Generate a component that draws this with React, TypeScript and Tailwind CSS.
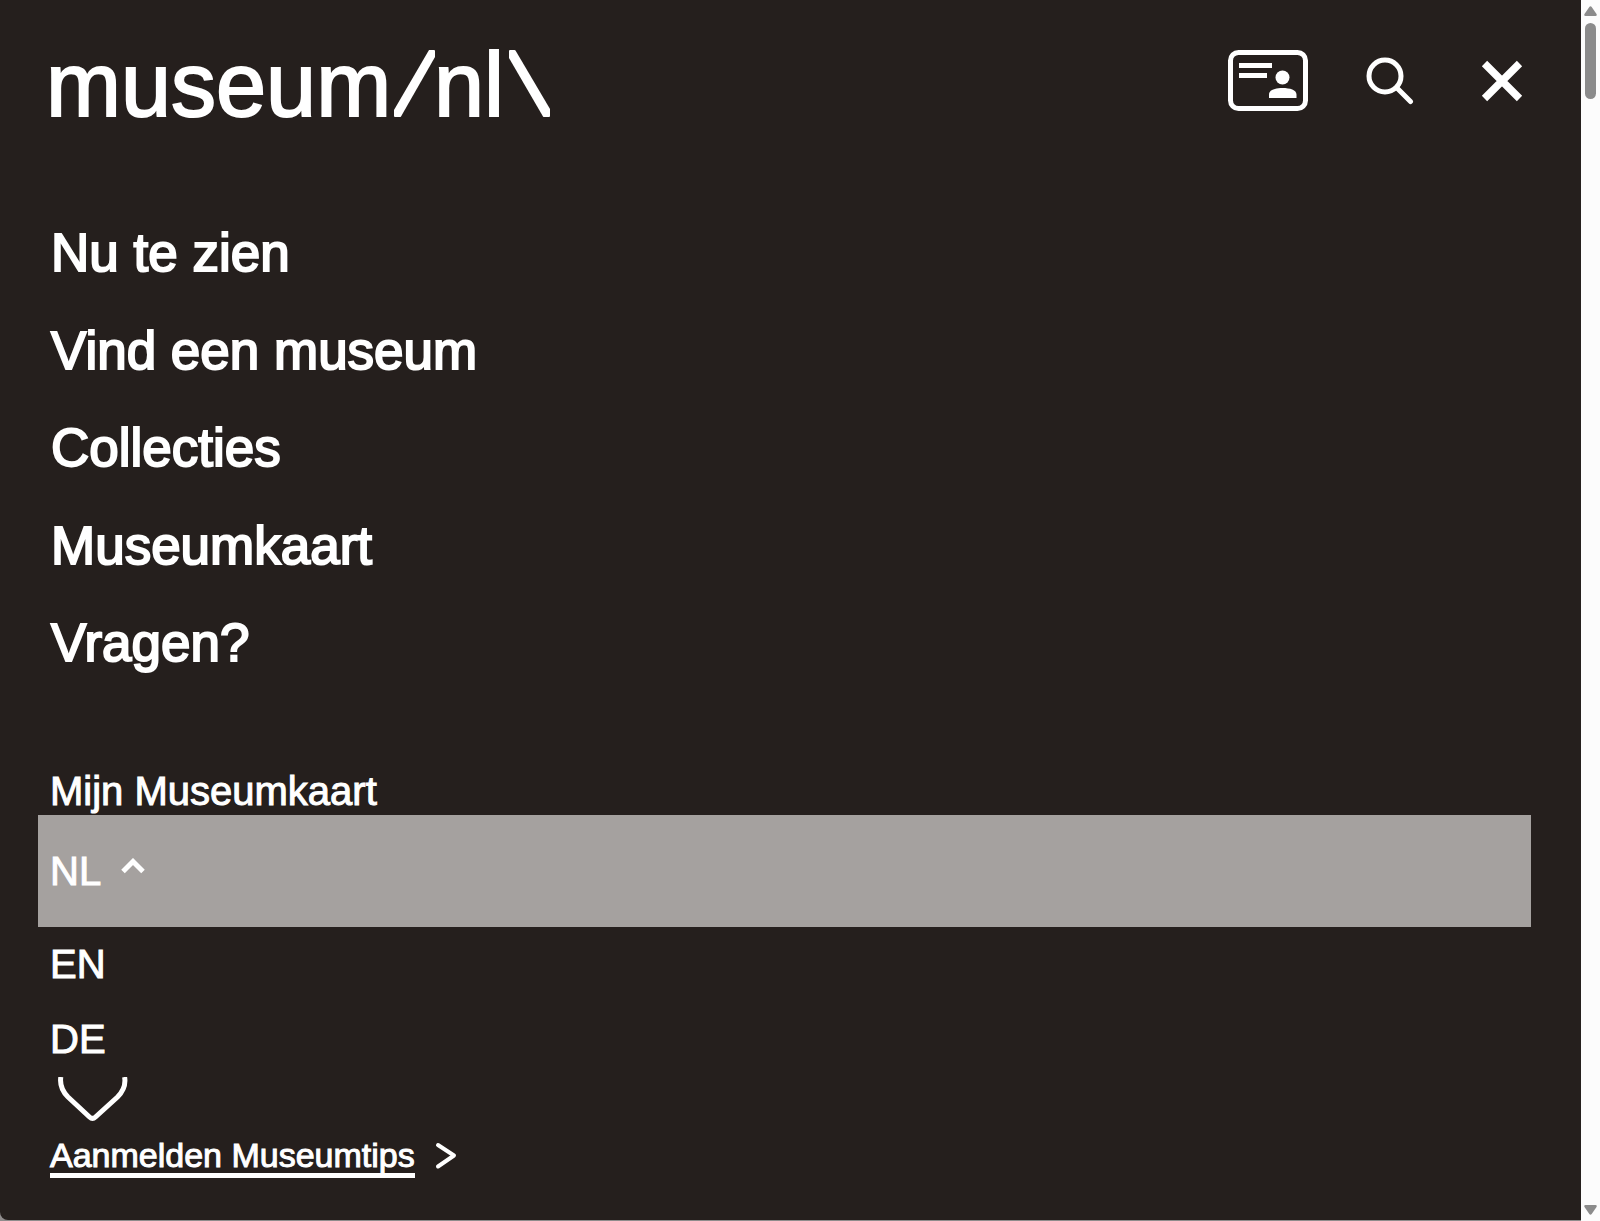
import React from "react";

const mainLinks = ["Nu te zien", "Vind een museum", "Collecties", "Museumkaart", "Vragen?"];

function Logo() {
  return (
    <a href="#" aria-label="museum.nl" className="block">
      <svg width="502" height="72" viewBox="0 0 502 72" className="block overflow-visible" fill="currentColor">
        <g fontSize="90" stroke="currentColor" strokeWidth="2">
          <text x="-4" y="66">museum</text>
          <text x="384" y="66">nl</text>
        </g>
        <path d="M379 0h5q1 0 1 1v6L351 66.500q-.5.5-1 .5h-5q-1 0-1-1v-6z" />
        <path d="M460 0h4.500q.6 0 1 .6L500 59V66q0 1-1 1h-5q-.6 0-1-.6L459 8V1q0-1 1-1z" />
      </svg>
    </a>
  );
}

function CardIcon() {
  return (
    <svg width="80" height="61" viewBox="0 0 80 61" fill="currentColor">
      <rect x="2.500" y="2.500" width="75" height="56" rx="8" fill="none" stroke="currentColor" strokeWidth="5" />
      <path d="M11 13h33v5H11zM11 23h28v5H11z" />
      <circle cx="54.500" cy="27.500" r="7" />
      <path d="M41 48v-3.500c0-4.500 6-6.500 13.500-6.500s14 2 14 6.500V48z" />
    </svg>
  );
}

function SearchIcon() {
  return (
    <svg width="48" height="48" viewBox="0 0 48 48" fill="none" stroke="currentColor" strokeWidth="5" strokeLinecap="round">
      <circle cx="19" cy="19" r="16" />
      <path d="M31 31l13.500 13.500" />
    </svg>
  );
}

function CloseIcon() {
  return (
    <svg width="42" height="42" viewBox="0 0 42 42" fill="none" stroke="currentColor" strokeWidth="7.500">
      <path d="M3.500 3.500l35 35M38.500 3.500l-35 35" />
    </svg>
  );
}

function Scrollbar() {
  return (
    <div aria-hidden="true" className="flex w-[19px] shrink-0 flex-col items-center bg-[#fcfcfc] py-1.5 text-[#8b8b8b]">
      <svg width="13" height="10" viewBox="0 0 13 10" fill="currentColor" className="shrink-0">
        <path d="M5.300 1q1.200-1.500 2.400 0l4.800 7q.8 2-1 2h-10q-1.800 0-1-2z" />
      </svg>
      <div className="mt-[7px] h-[76px] w-[11px] rounded-full bg-[#8b8b8b]" />
      <svg width="13" height="10" viewBox="0 0 13 10" fill="currentColor" className="mt-auto shrink-0">
        <path d="M5.300 9q1.200 1.500 2.400 0l4.800-7q.8-2-1-2h-10q-1.800 0-1 2z" />
      </svg>
    </div>
  );
}

export default function App() {
  return (
    <div className="flex min-h-screen bg-[#8f8c8c] font-['Liberation_Sans',sans-serif] text-white [-webkit-text-stroke:1px_white]">
      <div className="mb-px min-w-0 flex-1 rounded-bl-lg bg-[#251f1d] px-[50px]">
        <header className="flex items-start justify-between pt-[50px]">
          <Logo />
          <div className="flex items-center pr-2">
            <button type="button" aria-label="Mijn Museumkaart" className="mr-[58px]"><CardIcon /></button>
            <button type="button" aria-label="Zoeken" className="mr-[67px]"><SearchIcon /></button>
            <button type="button" aria-label="Sluiten"><CloseIcon /></button>
          </div>
        </header>

        <nav aria-label="Hoofdmenu" className="pt-[95px]">
          <ul className="text-[53px] [-webkit-text-stroke:2px_white]">
            {mainLinks.map((label) => (
              <li key={label} className="pb-[25px] pl-px leading-[72px] last:pb-0 [&:nth-child(odd)]:pb-[26px]">
                <a href="#">{label}</a>
              </li>
            ))}
          </ul>
        </nav>

        <div className="pt-[62px] text-[40px] leading-[48px]">
          <a href="#" className="block">Mijn Museumkaart</a>
          <div className="-ml-3">
            <button type="button" aria-expanded="true" className="flex h-28 w-full items-center gap-5 bg-[#a5a19f] px-3 text-left">
              <span>NL</span>
              <svg width="24" height="16" viewBox="0 0 24 16" fill="none" stroke="currentColor" strokeWidth="5" className="mb-2.5">
                <path d="M2 13.500l10-10 10 10" />
              </svg>
            </button>
          </div>
          <ul className="leading-[75px]">
            <li><a href="#">EN</a></li>
            <li><a href="#">DE</a></li>
          </ul>
        </div>

        <a href="#" aria-label="Favorieten" className="block pl-2">
          <svg width="70" height="46" viewBox="0 0 70 46" fill="none" stroke="currentColor" strokeWidth="5">
            <path d="M2.800 0C1.800 7 4 14 10 20L31.500 40Q34.500 42.800 37.500 40L59.500 20C65.500 14 67.800 7 66.600 0" />
          </svg>
        </a>

        <div className="flex items-start gap-5 pt-[15px] pb-8">
          <a href="#" className="border-b-[5px] border-white text-[34px] leading-[35px]">Aanmelden Museumtips</a>
          <svg aria-hidden="true" width="22" height="28" viewBox="0 0 22 28" fill="none" stroke="currentColor" strokeWidth="4" strokeLinejoin="round" strokeLinecap="round" className="mt-1">
            <path d="M3 3l16 10.500L3 24.500" />
          </svg>
        </div>
      </div>
      <Scrollbar />
    </div>
  );
}
